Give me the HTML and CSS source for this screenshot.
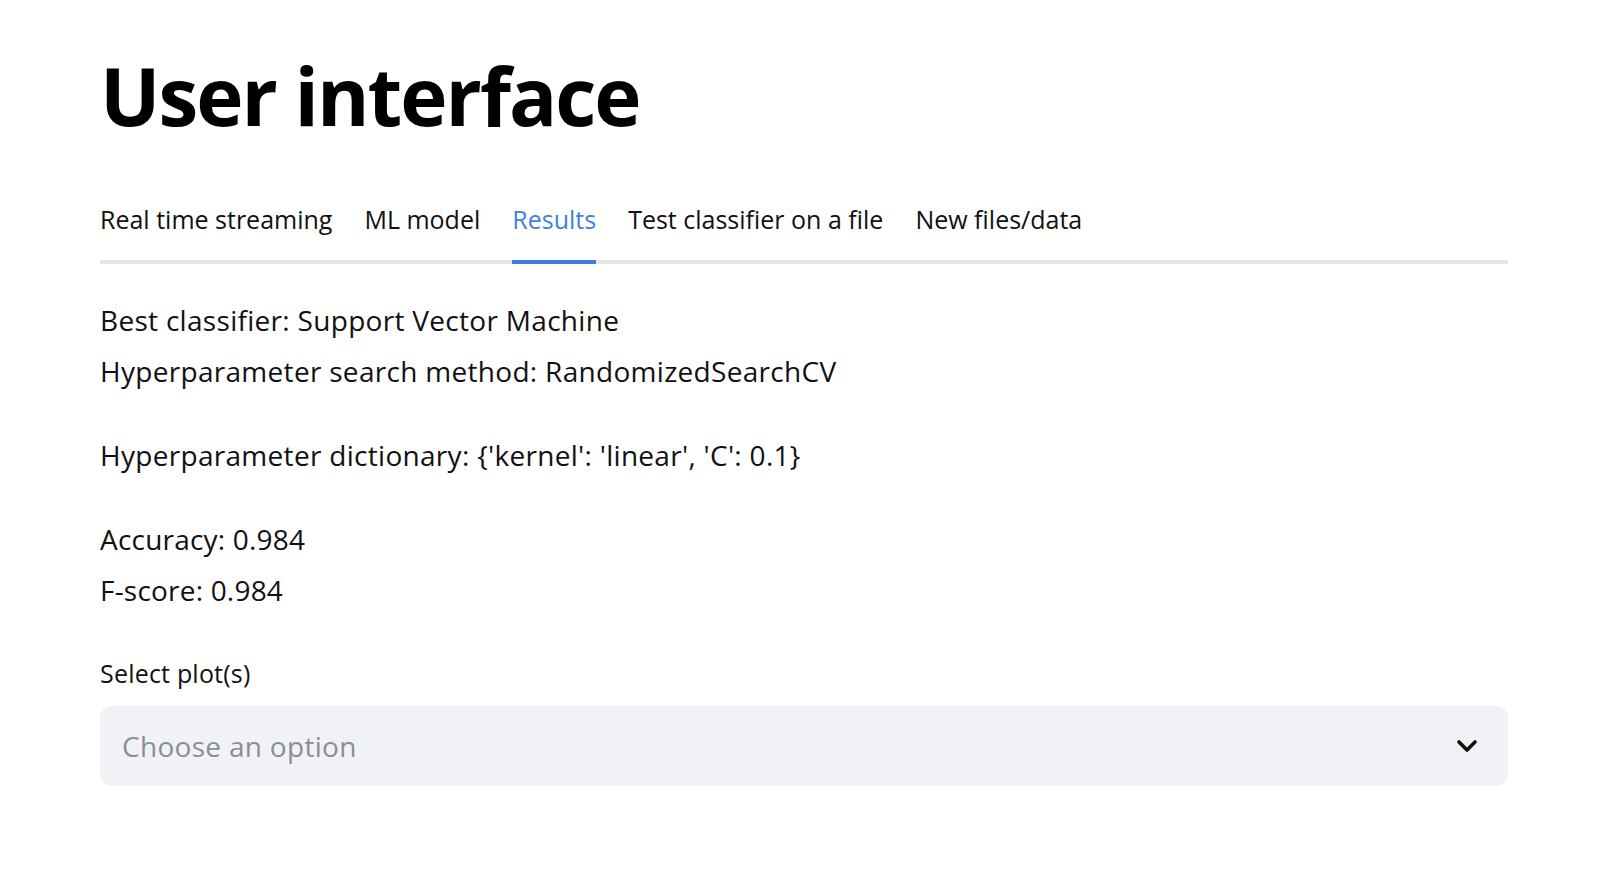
FILE: index.html
```html
<!DOCTYPE html>
<html lang="en">
<head>
<meta charset="utf-8">
<title>User interface</title>
<link rel="stylesheet" href="styles.css">
</head>
<body>
<main class="main">
  <h1 class="title">User interface</h1>
  <nav class="tabs">
    <div class="tab">Real time streaming</div>
    <div class="tab">ML model</div>
    <div class="tab tab-active">Results</div>
    <div class="tab">Test classifier on a file</div>
    <div class="tab">New files/data</div>
  </nav>
  <section class="content">
    <div class="group">
      <p class="line">Best classifier: Support Vector Machine</p>
      <p class="line">Hyperparameter search method: RandomizedSearchCV</p>
    </div>
    <div class="group">
      <p class="line">Hyperparameter dictionary: {'kernel': 'linear', 'C': 0.1}</p>
    </div>
    <div class="group">
      <p class="line metric">Accuracy: 0.984</p>
      <p class="line metric">F-score: 0.984</p>
    </div>
  </section>
  <div class="field">
    <label class="field-label">Select plot(s)</label>
    <div class="select">
      <span class="placeholder">Choose an option</span>
      <svg class="chevron" width="22" height="14" viewBox="0 0 22 14" aria-hidden="true">
        <path d="M3 3 L11 11 L19 3" fill="none" stroke="#111" stroke-width="3.6" stroke-linecap="round" stroke-linejoin="round"/>
      </svg>
    </div>
  </div>
</main>
</body>
</html>
```
FILE: styles.css
```css
html, body {
  margin: 0;
  padding: 0;
  background: #ffffff;
}

body {
  font-family: "Open Sans", "Noto Sans", sans-serif;
  color: #000000;
}

.main {
  width: 1408px;
  margin: 0 0 0 100px;
  padding-top: 47px;
  display: flex;
  flex-direction: column;
}

.title {
  margin: 0;
  font-size: 80px;
  font-weight: 700;
  letter-spacing: -2px;
  line-height: 96px;
  color: #000000;
}

.tabs {
  margin-top: 56px;
  display: flex;
  gap: 32px;
  border-bottom: 4px solid #e6e6e6;
}

.tab {
  font-size: 25px;
  line-height: 40px;
  padding-bottom: 21px;
  color: #111111;
  white-space: nowrap;
}

.tab-active {
  color: #3f80e0;
  border-bottom: 4px solid #3d7fe0;
  margin-bottom: -4px;
}

.content {
  margin-top: 31px;
  display: flex;
  flex-direction: column;
  gap: 33px;
}

.group {
  display: flex;
  flex-direction: column;
}

.line {
  margin: 0;
  font-size: 28px;
  line-height: 51px;
  letter-spacing: 0.3px;
  color: #111111;
}

.metric {
  letter-spacing: 0.2px;
}

.field {
  margin-top: 42px;
  display: flex;
  flex-direction: column;
  gap: 18px;
}

.field-label {
  font-size: 25px;
  line-height: 30px;
  letter-spacing: 0.2px;
  color: #111111;
}

.select {
  height: 80px;
  background: #f0f2f6;
  border-radius: 12px;
  display: flex;
  align-items: center;
  justify-content: space-between;
  padding: 0 30px 0 22px;
}

.placeholder {
  font-size: 28px;
  line-height: 80px;
  letter-spacing: 0.3px;
  color: #8c8e96;
}

.chevron {
  display: block;
}
```
